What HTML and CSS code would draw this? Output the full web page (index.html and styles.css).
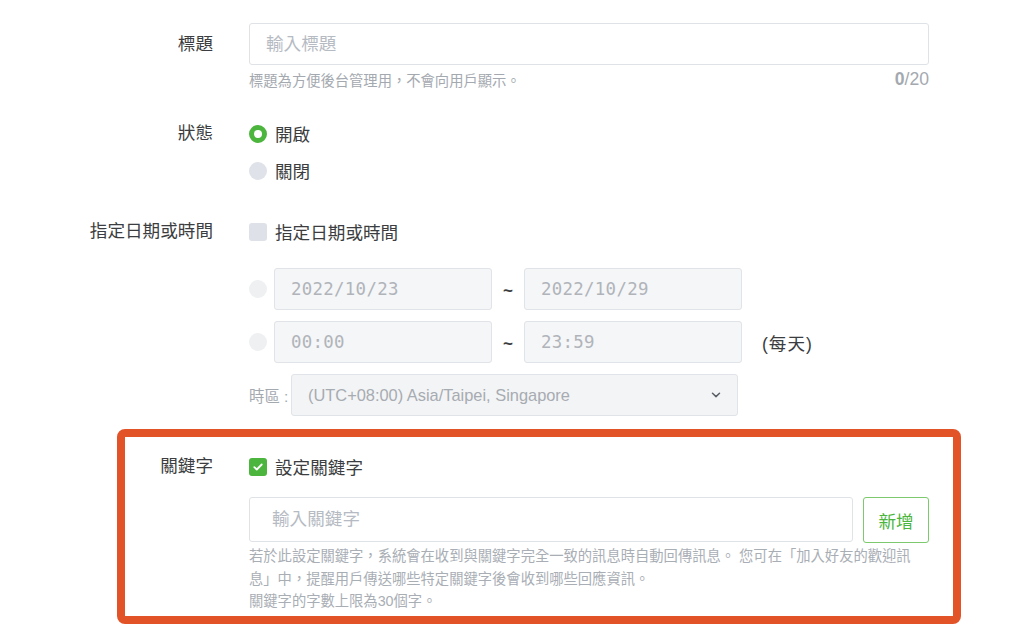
FILE: index.html
```html
<!DOCTYPE html>
<html lang="zh-Hant">
<head>
    <meta charset="UTF-8">
    <meta name="viewport" content="width=device-width, initial-scale=1.0">
    <link rel="stylesheet" href="styles.css">
    <title>自動回應設定</title>
</head>
<body>
    <div class="form">
        <div class="row">
            <label class="row-label title-label" for="title">標題</label>
            <div class="row-body">
                <input type="text" id="title" class="text-input" placeholder="輸入標題">
                <div class="hint-line">
                    <span class="hint">標題為方便後台管理用，不會向用戶顯示。</span>
                    <span class="counter"><b>0</b>/20</span>
                </div>
            </div>
        </div>

        <div class="row status-row">
            <div class="row-label">狀態</div>
            <div class="row-body">
                <label class="option"><span class="radio on"></span>開啟</label>
                <label class="option"><span class="radio"></span>關閉</label>
            </div>
        </div>

        <div class="row period-section">
            <div class="row-label">指定日期或時間</div>
            <div class="row-body">
                <label class="option"><span class="check"></span>指定日期或時間</label>
                <div class="period">
                    <div class="period-row">
                        <span class="radio off"></span>
                        <input type="text" class="field" value="2022/10/23" disabled>
                        <span class="tilde">~</span>
                        <input type="text" class="field" value="2022/10/29" disabled>
                    </div>
                    <div class="period-row">
                        <span class="radio off"></span>
                        <input type="text" class="field" value="00:00" disabled>
                        <span class="tilde">~</span>
                        <input type="text" class="field" value="23:59" disabled>
                        <span class="daily">(每天)</span>
                    </div>
                    <div class="tz-row">
                        <span class="tz-label">時區 :</span>
                        <div class="select">
                            <span>(UTC+08:00) Asia/Taipei, Singapore</span>
                            <svg width="10" height="6" viewBox="0 0 10 6"><path d="M1.5 1.2 5 4.6 8.5 1.2" fill="none" stroke="#5b5f66" stroke-width="1.5" stroke-linecap="round" stroke-linejoin="round"/></svg>
                        </div>
                    </div>
                </div>
            </div>
        </div>

        <div class="row highlight">
            <div class="row-label">關鍵字</div>
            <div class="row-body">
                <label class="option">
                    <span class="check on">
                        <svg width="10" height="8" viewBox="0 0 10 8"><path d="M1.3 4.2 3.8 6.5 8.7 1.5" fill="none" stroke="#fff" stroke-width="1.8" stroke-linecap="round" stroke-linejoin="round"/></svg>
                    </span>設定關鍵字
                </label>
                <div class="keyword-line">
                    <input type="text" class="text-input keyword-input" placeholder="輸入關鍵字">
                    <button class="add-button">新增</button>
                </div>
                <p class="keyword-hint">若於此設定關鍵字，系統會在收到與關鍵字完全一致的訊息時自動回傳訊息。 您可在「加入好友的歡迎訊息」中，提醒用戶傳送哪些特定關鍵字後會收到哪些回應資訊。<br>關鍵字的字數上限為30個字。</p>
            </div>
        </div>
    </div>
</body>
</html>
```

FILE: styles.css
```css
body {
    margin: 0;
    background-color: #fff;
    font-family: "Liberation Sans", "Noto Sans CJK JP", sans-serif;
    color: #3b3d40;
}

.form {
    width: 929px;
    padding-top: 23px;
}

.row {
    display: flex;
    gap: 36px;
}

.row-label {
    width: 213px;
    flex-shrink: 0;
    text-align: right;
    font-size: 17.6px;
    line-height: 37px;
}

.title-label {
    line-height: 42px;
}

.row-body {
    flex: 1;
    min-width: 0;
}

.text-input {
    display: block;
    width: 100%;
    height: 42px;
    box-sizing: border-box;
    padding: 0 16px;
    border: 1px solid #dfe2e6;
    border-radius: 3px;
    font-family: inherit;
    font-size: 17.6px;
    color: #3b3d40;
    outline: none;
}

.text-input::placeholder {
    color: #b6bbc3;
}

.hint-line {
    display: flex;
    justify-content: space-between;
    align-items: center;
    height: 28px;
}

.hint {
    font-size: 14.3px;
    color: #a4a9b0;
}

.counter {
    font-size: 17.6px;
    color: #a4a9b0;
}

.status-row {
    margin-top: 22px;
}

.period-section {
    margin-top: 24px;
}

.option {
    display: flex;
    align-items: center;
    gap: 8px;
    height: 37px;
    font-size: 17.6px;
}

.radio {
    width: 18px;
    height: 18px;
    box-sizing: border-box;
    border-radius: 50%;
    background-color: #dfe2e8;
    flex-shrink: 0;
}

.radio.on {
    background-color: #fff;
    border: 5px solid #4cb53d;
}

.radio.off {
    background-color: #eef0f2;
}

.check {
    display: flex;
    align-items: center;
    justify-content: center;
    width: 18px;
    height: 18px;
    border-radius: 3px;
    background-color: #dee1e7;
    flex-shrink: 0;
}

.check.on {
    background-color: #4cb53d;
}

.period {
    margin-top: 18px;
    display: flex;
    flex-direction: column;
    gap: 11px;
}

.period-row {
    display: flex;
    align-items: center;
    height: 42px;
}

.period-row .radio {
    margin-right: 7px;
}

.field {
    width: 218px;
    height: 42px;
    box-sizing: border-box;
    padding: 0 16px;
    border: 1px solid #e0e3e7;
    border-radius: 3px;
    background-color: #f5f6f7;
    font-family: "DejaVu Sans Mono", "Liberation Mono", monospace;
    font-size: 17.4px;
    color: #b0b4ba;
    letter-spacing: 0.3px;
}

.tilde {
    width: 32px;
    padding-top: 3px;
    text-align: center;
    font-size: 17px;
    font-weight: 700;
    color: #3b3d40;
}

.daily {
    margin-left: 20px;
    font-size: 17.6px;
    letter-spacing: 1px;
}

.tz-row {
    display: flex;
    align-items: center;
    height: 42px;
}

.tz-label {
    width: 42px;
    flex-shrink: 0;
    white-space: nowrap;
    font-size: 15.4px;
    color: #a4a9b0;
}

.select {
    display: flex;
    align-items: center;
    justify-content: space-between;
    width: 447px;
    height: 42px;
    box-sizing: border-box;
    padding: 0 16px;
    border: 1px solid #e0e3e7;
    border-radius: 3px;
    background-color: #f3f4f5;
    font-size: 16.4px;
    color: #a7abb2;
}

.highlight {
    margin: 13px 0 0 117px;
    width: 844px;
    box-sizing: border-box;
    padding: 11px 24px 3px 0;
    border: 8px solid #e35328;
    border-radius: 8px;
}

.highlight .row-label {
    width: 88px;
}

.keyword-line {
    display: flex;
    gap: 10px;
    margin-top: 12px;
}

.keyword-input {
    flex: 1;
    height: 45px;
    padding-left: 22px;
}

.add-button {
    width: 66px;
    height: 46px;
    border: 1px solid #7cc96e;
    border-radius: 3px;
    background-color: #fff;
    font-family: inherit;
    font-size: 17.6px;
    color: #4cb53d;
}

.keyword-hint {
    margin: 2px 0 0;
    max-width: 668px;
    font-size: 14.3px;
    line-height: 22.5px;
    color: #a9aeb5;
}
```
